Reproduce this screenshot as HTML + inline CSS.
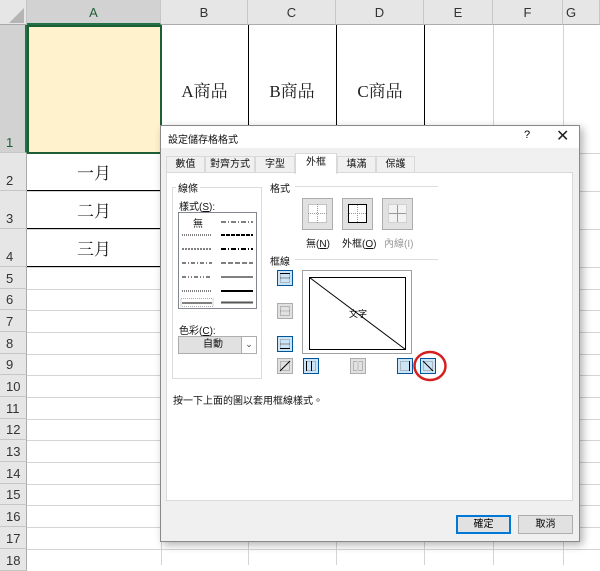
<!DOCTYPE html>
<html><head><meta charset="utf-8"><style>
*{margin:0;padding:0;box-sizing:border-box}
body{width:600px;height:565px;overflow:hidden;background:#fff;position:relative;font-family:"Liberation Sans","Noto Sans CJK TC",sans-serif}
.a{position:absolute}
.ch{position:absolute;top:0;height:25px;background:#e6e6e6;border-right:1px solid #c6c6c6;border-bottom:1px solid #ababab;font-size:13px;color:#333;text-align:center;line-height:26px}
.rh{position:absolute;left:0;width:27px;background:#e6e6e6;border-bottom:1px solid #c6c6c6;border-right:1px solid #ababab;font-size:13px;color:#333;padding-left:6px;display:flex;align-items:flex-end;padding-bottom:2px}
.hl{position:absolute;left:27px;right:0;height:1px;background:#d4d4d4}
.vl{position:absolute;top:25px;bottom:0;width:1px;background:#d4d4d4}
.serif{font-family:"Liberation Serif","Noto Serif CJK SC",serif;font-size:17px;color:#222}
.d{font-size:10px;color:#111}
.btn{position:absolute;border:1px solid #adadad;background:#e1e1e1;font-size:10px;text-align:center}
</style></head><body>
<div class="ch" style="left:0;width:27px;background:#e6e6e6"></div>
<svg class="a" style="left:8px;top:8px" width="17" height="16"><polygon points="16,0 16,15 1,15" fill="#b5b5b5"/></svg>
<div class="ch" style="left:27px;width:134px;background:#d2d2d2;border-bottom:2px solid #217346;color:#1e5e36">A</div>
<div class="ch" style="left:161px;width:87px">B</div>
<div class="ch" style="left:248px;width:88px">C</div>
<div class="ch" style="left:336px;width:88px">D</div>
<div class="ch" style="left:424px;width:69px">E</div>
<div class="ch" style="left:493px;width:70px">F</div>
<div class="ch" style="left:563px;width:37px;text-align:left;padding-left:3px">G</div>
<div class="rh" style="top:25px;height:128px;background:#d2d2d2;color:#1e5e36;border-right:2px solid #217346">1</div>
<div class="rh" style="top:153px;height:38px">2</div>
<div class="rh" style="top:191px;height:38px">3</div>
<div class="rh" style="top:229px;height:38px">4</div>
<div class="rh" style="top:267px;height:22px">5</div>
<div class="rh" style="top:289px;height:21px">6</div>
<div class="rh" style="top:310px;height:22px">7</div>
<div class="rh" style="top:332px;height:22px">8</div>
<div class="rh" style="top:354px;height:21px">9</div>
<div class="rh" style="top:375px;height:22px">10</div>
<div class="rh" style="top:397px;height:22px">11</div>
<div class="rh" style="top:419px;height:21px">12</div>
<div class="rh" style="top:440px;height:22px">13</div>
<div class="rh" style="top:462px;height:22px">14</div>
<div class="rh" style="top:484px;height:21px">15</div>
<div class="rh" style="top:505px;height:22px">16</div>
<div class="rh" style="top:527px;height:22px">17</div>
<div class="rh" style="top:549px;height:22px">18</div>
<div class="hl" style="top:153px"></div><div class="hl" style="top:191px"></div><div class="hl" style="top:229px"></div><div class="hl" style="top:267px"></div>
<div class="hl" style="top:289px"></div><div class="hl" style="top:310px"></div><div class="hl" style="top:332px"></div><div class="hl" style="top:354px"></div><div class="hl" style="top:375px"></div><div class="hl" style="top:397px"></div><div class="hl" style="top:419px"></div><div class="hl" style="top:440px"></div><div class="hl" style="top:462px"></div><div class="hl" style="top:484px"></div><div class="hl" style="top:505px"></div><div class="hl" style="top:527px"></div><div class="hl" style="top:549px"></div>
<div class="vl" style="left:161px"></div><div class="vl" style="left:248px"></div><div class="vl" style="left:336px"></div><div class="vl" style="left:424px"></div><div class="vl" style="left:493px"></div><div class="vl" style="left:563px"></div>
<div class="a" style="left:27px;top:25px;width:135px;height:129px;background:#fff2cc;border:2px solid #1e5e36"></div>
<div class="a" style="left:248px;top:25px;width:1px;height:128px;background:#000"></div>
<div class="a" style="left:336px;top:25px;width:1px;height:128px;background:#000"></div>
<div class="a" style="left:424px;top:25px;width:1px;height:128px;background:#000"></div>
<div class="a" style="left:27px;top:190px;width:134px;height:1px;background:#000"></div>
<div class="a" style="left:27px;top:228px;width:134px;height:1px;background:#000"></div>
<div class="a" style="left:27px;top:266px;width:134px;height:1px;background:#000"></div>
<div class="a serif" style="left:161px;top:77px;width:87px;text-align:center">A商品</div>
<div class="a serif" style="left:248px;top:77px;width:88px;text-align:center">B商品</div>
<div class="a serif" style="left:336px;top:77px;width:88px;text-align:center">C商品</div>
<div class="a serif" style="left:27px;top:159px;width:134px;text-align:center">一月</div>
<div class="a serif" style="left:27px;top:197px;width:134px;text-align:center">二月</div>
<div class="a serif" style="left:27px;top:235px;width:134px;text-align:center">三月</div>
<div class="a" style="left:160px;top:125px;width:420px;height:417px;background:#f0f0f0;border:1px solid #888;box-shadow:3px 3px 8px rgba(0,0,0,.3)"></div>
<div class="a" style="left:161px;top:126px;width:418px;height:22px;background:#fff"></div>
<div class="a d" style="left:168px;top:131px">設定儲存格格式</div>
<div class="a" style="left:524px;top:129px;font-size:11px">?</div>
<div class="a" style="left:556px;top:126px;font-size:16px;color:#222">✕</div>
<div class="a d" style="left:166px;top:156px;width:39px;height:17px;border:1px solid #d9d9d9;text-align:center;line-height:16px">數值</div>
<div class="a d" style="left:205px;top:156px;width:50px;height:17px;border:1px solid #d9d9d9;text-align:center;line-height:16px">對齊方式</div>
<div class="a d" style="left:255px;top:156px;width:40px;height:17px;border:1px solid #d9d9d9;text-align:center;line-height:16px">字型</div>
<div class="a d" style="left:295px;top:153px;width:42px;height:21px;border:1px solid #d9d9d9;border-bottom:none;background:#fff;text-align:center;line-height:18px;z-index:2">外框</div>
<div class="a d" style="left:337px;top:156px;width:39px;height:17px;border:1px solid #d9d9d9;text-align:center;line-height:16px">填滿</div>
<div class="a d" style="left:376px;top:156px;width:39px;height:17px;border:1px solid #d9d9d9;text-align:center;line-height:16px">保護</div>
<div class="a" style="left:166px;top:172px;width:407px;height:329px;background:#fff;border:1px solid #d9d9d9"></div>
<div class="a" style="left:172px;top:187px;width:90px;height:192px;border:1px solid #dcdcdc"></div>
<div class="a d" style="left:176px;top:180px;background:#fff;padding:0 2px">線條</div>
<div class="a d" style="left:179px;top:198px">樣式(<u>S</u>):</div>
<div class="a" style="left:178px;top:212px;width:79px;height:97px;border:1px solid #828790;background:#fff"></div>
<div class="a d" style="left:193px;top:215px">無</div>
<svg class="a" style="left:179px;top:213px" width="77" height="95">
<g stroke="#000" fill="none">
<line x1="42" y1="9" x2="74" y2="9" stroke-dasharray="5 2 1 2"/>
<line x1="3" y1="22" x2="33" y2="22" stroke-dasharray="1 1"/>
<line x1="42" y1="22" x2="74" y2="22" stroke-width="2" stroke-dasharray="4 1"/>
<line x1="3" y1="36" x2="33" y2="36" stroke-dasharray="2 1"/>
<line x1="42" y1="36" x2="74" y2="36" stroke-width="2" stroke-dasharray="5 2 1 2"/>
<line x1="3" y1="50" x2="33" y2="50" stroke-dasharray="4 2 1 2"/>
<line x1="42" y1="50" x2="74" y2="50" stroke-dasharray="5 2"/>
<line x1="3" y1="64" x2="33" y2="64" stroke-dasharray="4 2 1 2 1 2"/>
<line x1="42" y1="64" x2="74" y2="64"/>
<line x1="3" y1="78" x2="33" y2="78" stroke-dasharray="1 1"/>
<line x1="42" y1="78" x2="74" y2="78" stroke-width="2"/>
<line x1="42" y1="89" x2="74" y2="89" stroke-width="3" stroke="#555"/>
<line x1="42" y1="88" x2="74" y2="88" stroke="#fff"/>
<line x1="3" y1="90" x2="33" y2="90"/>
<rect x="2" y="85.5" width="32" height="8" stroke="#aaa" stroke-dasharray="1 1"/>
</g></svg>
<div class="a d" style="left:179px;top:322px">色彩(<u>C</u>):</div>
<div class="a d" style="left:178px;top:336px;width:79px;height:18px;border:1px solid #adadad;background:#e1e1e1;line-height:16px;padding-left:24px">自動</div>
<div class="a" style="left:241px;top:337px;width:15px;height:16px;background:#fff;border-left:1px solid #adadad;font-size:9px;text-align:center;line-height:15px;color:#444">⌄</div>
<div class="a" style="left:295px;top:186px;width:143px;height:1px;background:#dcdcdc"></div>
<div class="a d" style="left:270px;top:180px">格式</div>
<svg class="a" style="left:302px;top:198px" width="140" height="36">
<g fill="#e1e1e1" stroke="#adadad"><rect x=".5" y=".5" width="30" height="31"/><rect x="40.5" y=".5" width="30" height="31"/><rect x="80.5" y=".5" width="30" height="31"/></g>
<g fill="#fff" stroke="#999" stroke-dasharray="1 1"><rect x="6.5" y="6.5" width="18" height="18"/><line x1="15.5" y1="6" x2="15.5" y2="25"/><line x1="6" y1="15.5" x2="25" y2="15.5"/></g>
<rect x="46.5" y="6.5" width="18" height="18" fill="#fff" stroke="#000"/><g stroke="#999" stroke-dasharray="1 1"><line x1="55.5" y1="7" x2="55.5" y2="24"/><line x1="47" y1="15.5" x2="64" y2="15.5"/></g>
<rect x="86.5" y="6.5" width="18" height="18" fill="#f2f2f2" stroke="#bbb" stroke-dasharray="1 1"/><g stroke="#999"><line x1="95.5" y1="7" x2="95.5" y2="24"/><line x1="87" y1="15.5" x2="104" y2="15.5"/></g>
</svg>
<div class="a d" style="left:306px;top:235px">無(<u>N</u>)</div>
<div class="a d" style="left:342px;top:235px">外框(<u>O</u>)</div>
<div class="a d" style="left:384px;top:235px;color:#999">內線(I)</div>
<div class="a" style="left:295px;top:259px;width:143px;height:1px;background:#dcdcdc"></div>
<div class="a d" style="left:270px;top:253px">框線</div>
<svg class="a" style="left:277px;top:269px" width="170" height="112">
<g fill="#cce4f7" stroke="#005499"><rect x=".5" y="1.5" width="15" height="15"/><rect x=".5" y="67.5" width="15" height="15"/><rect x="26.5" y="89.5" width="15" height="15"/><rect x="120.5" y="89.5" width="15" height="15"/><rect x="143.5" y="89.5" width="15" height="15"/></g>
<g fill="#e1e1e1" stroke="#adadad"><rect x=".5" y="34.5" width="15" height="15"/><rect x=".5" y="89.5" width="15" height="15"/><rect x="73.5" y="89.5" width="15" height="15"/></g>
<g stroke="#888" fill="none" stroke-dasharray="1 1"><rect x="3.5" y="4.5" width="9" height="9"/><rect x="3.5" y="37.5" width="9" height="9"/><rect x="3.5" y="70.5" width="9" height="9"/><rect x="3.5" y="92.5" width="9" height="9"/><rect x="29.5" y="92.5" width="9" height="9"/><rect x="76.5" y="92.5" width="9" height="9"/><rect x="123.5" y="92.5" width="9" height="9"/><rect x="146.5" y="92.5" width="9" height="9"/></g>
<g stroke="#000"><line x1="3" y1="4.5" x2="13" y2="4.5"/><line x1="3" y1="79.5" x2="13" y2="79.5"/><line x1="29.5" y1="92" x2="29.5" y2="102"/><line x1="132.5" y1="92" x2="132.5" y2="102"/><line x1="3" y1="102" x2="13" y2="92"/><line x1="146" y1="92" x2="156" y2="102"/><line x1="34.5" y1="92" x2="34.5" y2="102"/><line x1="3" y1="9" x2="13" y2="9" stroke="#888"/><line x1="3" y1="75" x2="13" y2="75" stroke="#888"/></g>
<g stroke="#bbb"><line x1="3" y1="42" x2="13" y2="42"/><line x1="81" y1="92" x2="81" y2="102"/></g>
<rect x="25.5" y="1.5" width="109" height="83" fill="#fff" stroke="#a0a0a0"/>
<g stroke="#000" fill="none"><rect x="32.5" y="8.5" width="96" height="72"/><line x1="32.5" y1="8.5" x2="128.5" y2="80.5"/></g>
<text x="72" y="48" font-size="9" font-family="Noto Sans CJK TC">文字</text>
</svg>
<svg class="a" style="left:412px;top:350px" width="36" height="32"><ellipse cx="18" cy="16" rx="15.5" ry="14" fill="none" stroke="#d62020" stroke-width="2.5"/></svg>
<div class="a d" style="left:173px;top:392px">按一下上面的圖以套用框線樣式。</div>
<div class="btn" style="left:456px;top:515px;width:55px;height:19px;border:2px solid #0078d7;line-height:15px">確定</div>
<div class="btn" style="left:518px;top:515px;width:55px;height:19px;line-height:17px">取消</div>
</body></html>
